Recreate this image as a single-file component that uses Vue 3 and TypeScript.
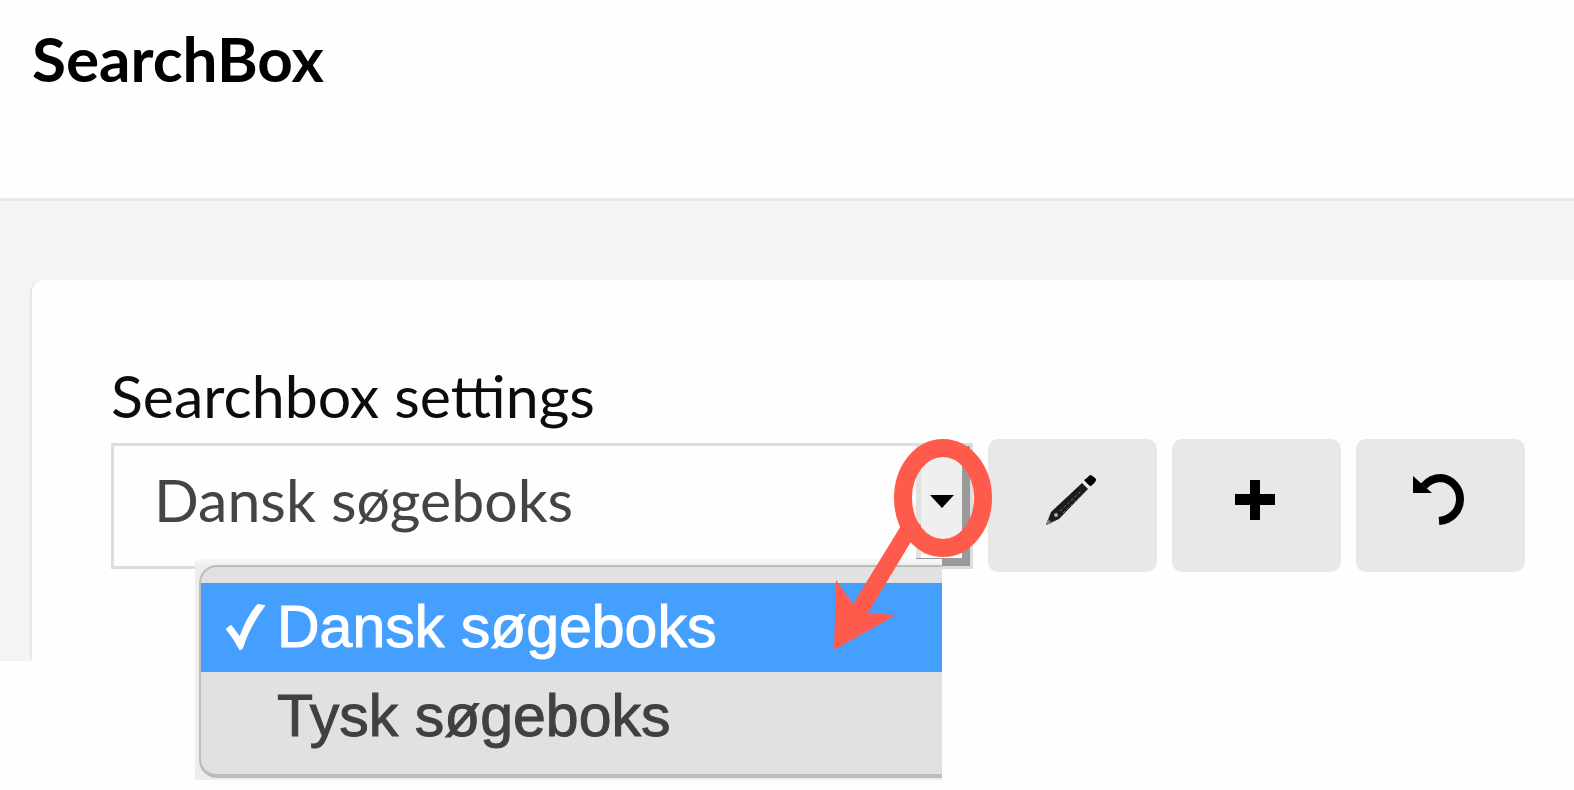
<script setup lang="ts">
import { ref } from 'vue'

const options: string[] = ['Dansk søgeboks', 'Tysk søgeboks']
const selected = ref<string>(options[0])
</script>

<template>
  <div class="page">
    <header class="header">
      <h1 class="title">SearchBox</h1>
    </header>
    <main class="body">
      <section class="card">
        <label class="label" for="searchbox">Searchbox settings</label>
        <div class="row">
          <div class="picker">
            <select id="searchbox" v-model="selected" class="select">
              <option v-for="o in options" :key="o" :value="o">{{ o }}</option>
            </select>
            <span class="drop" aria-hidden="true">
              <svg width="24" height="13" viewBox="0 0 24 13"><path d="M0 0H24L12 13Z" /></svg>
            </span>
            <div class="menu">
              <ul class="list" role="listbox" aria-label="Searchbox settings">
                <li
                  v-for="o in options"
                  :key="o"
                  class="item"
                  :class="{ active: o === selected }"
                  role="option"
                  :aria-selected="o === selected"
                  @click="selected = o"
                >
                  <span class="tick">
                    <svg v-if="o === selected" width="40" height="50" viewBox="0 0 40 50" aria-hidden="true">
                      <path d="M2 27L6 24L15 36C19 25 26 11 33 3L39 4C30 16 22 30 17 46L15 47C11 39 7 33 2 27Z" fill="#fff" stroke="#fff" stroke-width="2" stroke-linejoin="round" />
                    </svg>
                  </span>
                  <span>{{ o }}</span>
                </li>
              </ul>
            </div>
            <svg class="pointer" width="168" height="220" viewBox="0 0 168 220" aria-hidden="true">
              <ellipse cx="114" cy="63" rx="40" ry="50" fill="none" stroke="#ff5b4d" stroke-width="18" />
              <path d="M70 94L77 82L92 90L39 178L67 180L5 215L7 145L24 169Z" fill="#ff5b4d" />
            </svg>
          </div>
          <button class="action" type="button" aria-label="Edit">
            <svg width="52" height="52" viewBox="0 0 52 52">
              <path d="M1 51L6 38L37 9L43 15L14 45Z" fill="#1c1c1c" />
              <path d="M1 51L3 45L7 49Z" fill="#777" />
              <path d="M15 37L36 17M18 39L38 20" stroke="#777" stroke-width="1" stroke-dasharray="3 2" />
              <circle cx="11" cy="41" r="2" fill="#aaa" />
              <path d="M39 6Q41 5 45 1Q47 1 51 5Q52 7 46 12Q45 13 39 6Z" fill="#000" />
            </svg>
          </button>
          <button class="action" type="button" aria-label="Add">
            <svg width="52" height="52" viewBox="0 0 52 52">
              <path d="M21 6H31V20H46V31H31V46H21V31H6V20H21Z" />
            </svg>
          </button>
          <button class="action" type="button" aria-label="Reset">
            <svg width="52" height="52" viewBox="0 0 52 52">
              <path d="M11 12C17 5 23 4 28 4A21 21 0 0 1 47 25C47 37 38 46 26 47" fill="none" stroke="#000" stroke-width="8" />
              <path d="M0 2L19 19H0Z" />
            </svg>
          </button>
        </div>
      </section>
    </main>
  </div>
</template>

<style>
body {
  margin: 0;
  background: #fefefe;
}
</style>

<style scoped>
.page {
  min-height: 100vh;
  font-family: Lato, 'Liberation Sans', sans-serif;
  color: #0c0c0c;
}
.header {
  padding: 22px 32px 104px;
  border-bottom: 3px solid #e9e8e9;
  background: #fefefe;
}
.title {
  margin: 0;
  font-size: 62px;
  line-height: 72px;
  font-weight: 700;
  color: #000;
}
.body {
  padding: 79px 0 0 32px;
  background: #f5f3f4;
}
.card {
  padding: 80px 49px 89px 79px;
  border-top-left-radius: 12px;
  background: #fefefe;
  box-shadow: -3px 0 3px -2px #dddcdd;
}
.label {
  display: block;
  font-size: 59px;
  line-height: 72px;
}
.row {
  display: flex;
  align-items: center;
  gap: 15px;
  margin-top: 7px;
}
.picker {
  position: relative;
  flex: 1;
  min-width: 0;
}
.select {
  display: block;
  box-sizing: border-box;
  width: 100%;
  height: 126px;
  padding: 0 70px 12px 40px;
  border: 3px solid #ddd;
  border-radius: 0;
  outline: none;
  appearance: none;
  background: #fefefe;
  color: #444;
  font-family: inherit;
  font-size: 59px;
}
.drop {
  position: absolute;
  inset: 3px 3px 3px auto;
  box-sizing: border-box;
  width: 54px;
  display: flex;
  align-items: center;
  justify-content: center;
  padding-left: 6px;
  border: solid #999;
  border-width: 0 8px 8px 0;
  box-shadow: inset 5px 0 #e2e2e2, inset 0 -4px #fff;
  background: #efefef;
  pointer-events: none;
}
.menu {
  position: absolute;
  top: 116px;
  left: 84px;
  right: 31px;
  padding: 6px 0 2px 4px;
  background: linear-gradient(#f8f8f8, #ededed 8px);
}
.list {
  margin: 0;
  padding: 16px 0 13px;
  list-style: none;
  border: solid #bdbdbd;
  border-width: 2px 0 4px 2px;
  border-radius: 18px 0 0 18px;
  background: #e1e1e1;
  font-family: 'Liberation Sans', Arial, sans-serif;
  font-size: 59px;
  line-height: 89px;
  color: #404040;
  -webkit-text-stroke: 1px currentColor;
}
.item {
  display: flex;
  padding-left: 24px;
  white-space: nowrap;
}
.item.active {
  background: #459fff;
  color: #fff;
}
.tick {
  display: flex;
  align-items: center;
  width: 52px;
}
.pointer {
  position: absolute;
  top: -8px;
  right: -24px;
  pointer-events: none;
}
.action {
  flex: none;
  width: 169px;
  height: 133px;
  display: flex;
  align-items: center;
  justify-content: center;
  padding: 0 4px 12px 0;
  border: 0;
  border-radius: 10px;
  background: #e8e8ea;
  cursor: pointer;
}
</style>
